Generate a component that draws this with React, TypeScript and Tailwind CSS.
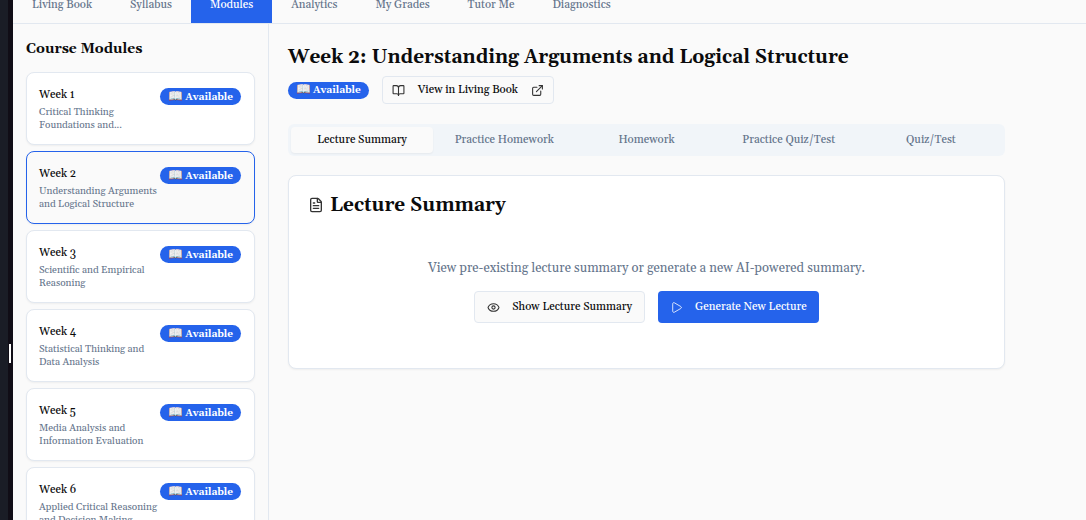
import { BookOpen, ExternalLink, Eye, FileText, Play } from "lucide-react";

const navItems = ["Living Book", "Syllabus", "Modules", "Analytics", "My Grades", "Tutor Me", "Diagnostics"];

const modules = [
  { week: "Week 1", lines: ["Critical Thinking", "Foundations and..."] },
  { week: "Week 2", lines: ["Understanding Arguments", "and Logical Structure"] },
  { week: "Week 3", lines: ["Scientific and Empirical", "Reasoning"] },
  { week: "Week 4", lines: ["Statistical Thinking and", "Data Analysis"] },
  { week: "Week 5", lines: ["Media Analysis and", "Information Evaluation"] },
  { week: "Week 6", lines: ["Applied Critical Reasoning", "and Decision Making"] },
];

const tabs = ["Lecture Summary", "Practice Homework", "Homework", "Practice Quiz/Test", "Quiz/Test"];

function AvailableBadge() {
  return (
    <span className="flex h-[17px] shrink-0 items-center gap-0.5 rounded-full bg-[#2563eb] px-2 text-[10px] leading-4 font-bold whitespace-nowrap text-white">
      <span className="text-xs leading-4">📖</span>
      Available
    </span>
  );
}

export default function App() {
  return (
    <div className="flex h-screen overflow-hidden bg-[#fafafa] font-[Georgia,Gelasio,'Noto_Serif','Liberation_Serif',serif] text-[#0b0b0c]">
      <div className="w-2 shrink-0 bg-[#1a1d26]" />
      <div className="flex w-[5px] shrink-0 flex-col justify-center bg-[#100d16] pt-[187px]">
        <div className="ml-px h-[19px] w-0.5 bg-white" />
      </div>
      <div className="flex min-w-0 flex-1 flex-col">
        <nav className="flex h-6 shrink-0 items-end border-b border-[#e2e8f0]">
          {navItems.map((item) => (
            <a
              key={item}
              href="#"
              className={
                item === "Modules"
                  ? "flex h-full items-start bg-[#2563eb] px-[19px] text-[11px] leading-[10px] font-medium whitespace-nowrap text-white"
                  : "flex h-full items-start px-[19px] text-[11px] leading-[10px] font-medium whitespace-nowrap text-[#64748b]"
              }
            >
              {item}
            </a>
          ))}
        </nav>
        <div className="flex min-h-0 flex-1">
          <aside className="w-64 shrink-0 overflow-hidden border-r border-[#e2e8f0] px-[13px] pt-[15px]">
            <h2 className="text-sm leading-5 font-bold">Course Modules</h2>
            <div className="mt-[13px] flex flex-col gap-1.5">
              {modules.map((m) => (
                <button
                  key={m.week}
                  type="button"
                  className={
                    m.week === "Week 2"
                      ? "flex w-full items-start justify-between rounded-lg border border-[#2563eb] bg-[#fafafa] py-3 pr-[13px] pl-3 text-left shadow-xs"
                      : "flex w-full items-start justify-between rounded-lg border border-[#e2e8f0] bg-white py-3 pr-[13px] pl-3 text-left shadow-xs"
                  }
                >
                  <span className="flex min-w-0 flex-col">
                    <span className="text-[11px] leading-5 font-medium">{m.week}</span>
                    <span className="mt-px flex flex-col text-[10px] leading-[13px] whitespace-nowrap text-[#64748b]">
                      {m.lines.map((line) => (
                        <span key={line}>{line}</span>
                      ))}
                    </span>
                  </span>
                  <span className="mt-[3px]">
                    <AvailableBadge />
                  </span>
                </button>
              ))}
            </div>
          </aside>
          <main className="min-w-0 flex-1 px-[19px] pt-[21px]">
            <div className="max-w-[717px]">
              <h1 className="text-[19px] leading-6 font-bold whitespace-nowrap">
                Week 2: Understanding Arguments and Logical Structure
              </h1>
              <div className="mt-[7px] flex items-center gap-[13px]">
                <AvailableBadge />
                <button
                  type="button"
                  className="flex h-7 items-center rounded border border-[#e2e8f0] px-[9px] text-[11px] font-medium whitespace-nowrap"
                >
                  <BookOpen size={13} className="text-[#333333]" />
                  <span className="mx-[13px]">View in Living Book</span>
                  <ExternalLink size={13} className="text-[#333333]" />
                </button>
              </div>
              <div role="tablist" className="mt-5 grid h-8 grid-cols-5 rounded-md bg-[#f1f5f9] p-[3px]">
                {tabs.map((tab, i) => (
                  <button
                    key={tab}
                    type="button"
                    role="tab"
                    aria-selected={i === 0}
                    className={
                      i === 0
                        ? "rounded bg-[#fafafa] pt-px text-[11px] font-medium whitespace-nowrap shadow-xs"
                        : "rounded pt-px text-[11px] font-medium whitespace-nowrap text-[#64748b]"
                    }
                  >
                    {tab}
                  </button>
                ))}
              </div>
              <section className="mt-[19px] rounded-lg border border-[#e2e8f0] bg-white px-[19px] pt-[17px] pb-[45px] shadow-xs">
                <h2 className="flex items-center gap-1.5 text-[19px] leading-6 font-bold">
                  <FileText size={16} className="text-[#333333]" />
                  Lecture Summary
                </h2>
                <div className="mt-[41px] flex flex-col items-center">
                  <p className="text-[13px] leading-5 text-[#64748b]">
                    View pre-existing lecture summary or generate a new AI-powered summary.
                  </p>
                  <div className="mt-[13px] flex gap-[13px]">
                    <button
                      type="button"
                      className="flex h-8 items-center gap-3 rounded border border-[#e2e8f0] bg-[#fafafa] px-3 text-[11px] font-medium whitespace-nowrap"
                    >
                      <Eye size={13} className="text-[#333333]" />
                      Show Lecture Summary
                    </button>
                    <button
                      type="button"
                      className="flex h-8 items-center gap-3 rounded bg-[#2563eb] px-3 text-[11px] font-medium whitespace-nowrap text-white"
                    >
                      <Play size={13} strokeWidth={1.5} />
                      Generate New Lecture
                    </button>
                  </div>
                </div>
              </section>
            </div>
          </main>
        </div>
      </div>
    </div>
  );
}
